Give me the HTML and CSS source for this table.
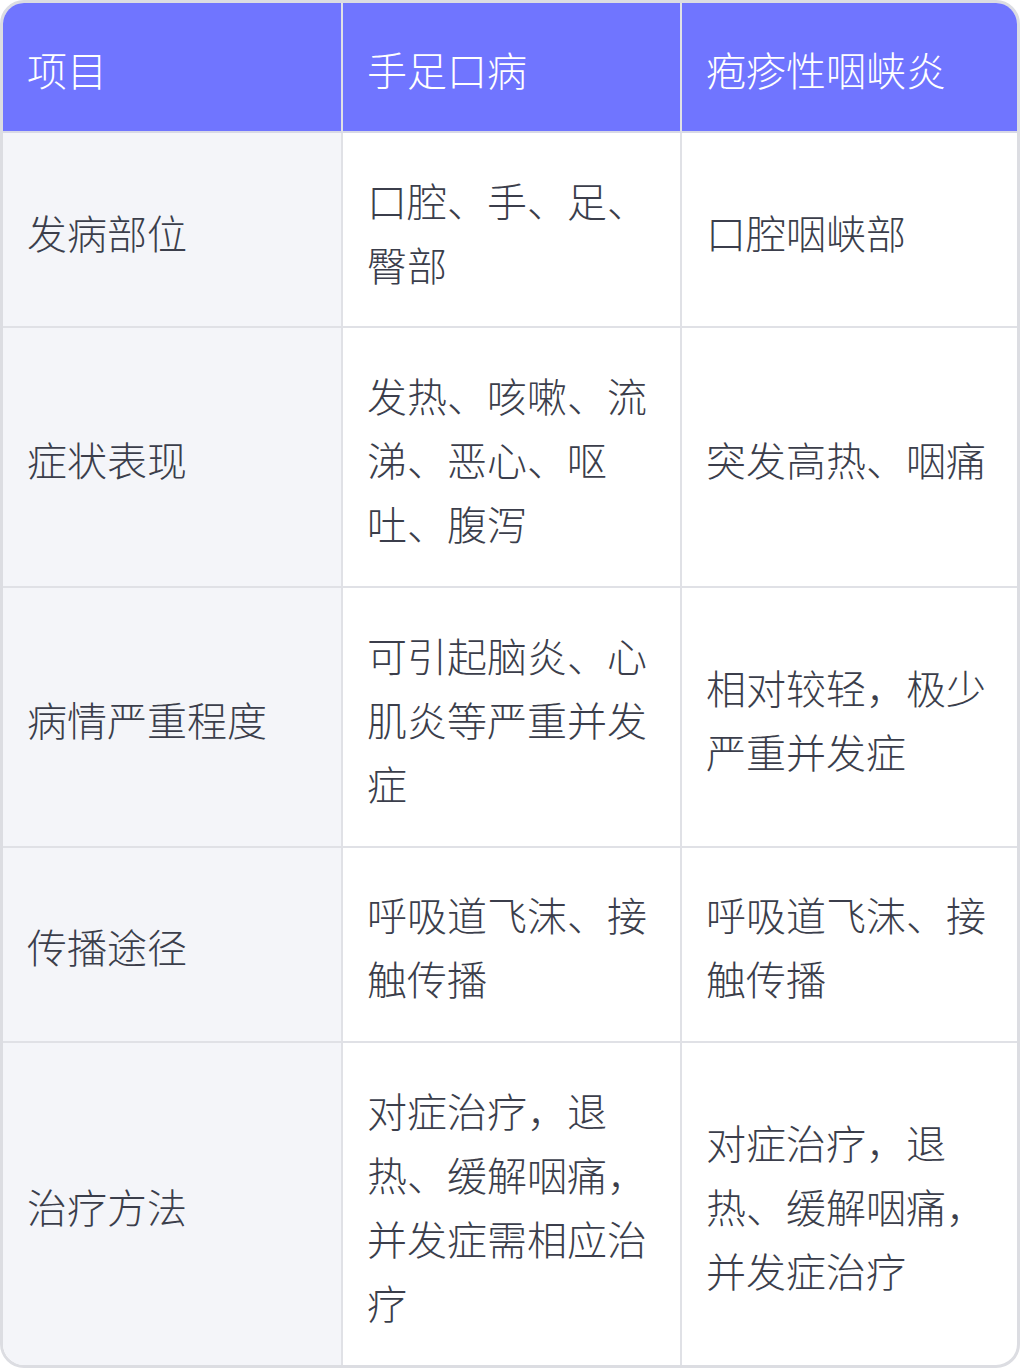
FILE: index.html
```html
<!DOCTYPE html>
<html lang="zh-CN">
<head>
<meta charset="utf-8">
<link rel="stylesheet" href="styles.css">
</head>
<body>
<div class="wrap">
<table class="cmp">
<colgroup><col class="c1"><col class="c2"><col class="c3"></colgroup>
<thead>
<tr><th>项目</th><th>手足口病</th><th>疱疹性咽峡炎</th></tr>
</thead>
<tbody>
<tr><td>发病部位</td><td>口腔、手、足、臀部</td><td>口腔咽峡部</td></tr>
<tr><td>症状表现</td><td>发热、咳嗽、流涕、恶心、呕吐、腹泻</td><td>突发高热、咽痛</td></tr>
<tr><td>病情严重程度</td><td>可引起脑炎、心肌炎等严重并发症</td><td>相对较轻，极少严重并发症</td></tr>
<tr><td>传播途径</td><td>呼吸道飞沫、接触传播</td><td>呼吸道飞沫、接触传播</td></tr>
<tr class="last"><td>治疗方法</td><td>对症治疗，退热、缓解咽痛，并发症需相应治疗</td><td>对症治疗，退热、缓解咽痛，并发症治疗</td></tr>
</tbody>
</table>
</div>
</body>
</html>
```
FILE: styles.css
```css
html, body {
  margin: 0;
  padding: 0;
  background: #ffffff;
}
.wrap {
  width: 1020px;
  height: 1368px;
  box-sizing: border-box;
  border: 3px solid #dcdde2;
  border-radius: 24px;
  overflow: hidden;
  background: #ffffff;
}
.cmp {
  width: 100%;
  height: 100%;
  border-collapse: separate;
  border-spacing: 0;
  table-layout: fixed;
  font-family: "Noto Sans CJK SC", "Noto Sans", sans-serif;
  font-weight: 300;
  font-size: 40px;
  line-height: 64px;
  color: #3b3e4b;
}
.c1 { width: 340px; }
.c2 { width: 339px; }
.c3 { width: 335px; }
.cmp th, .cmp td {
  text-align: left;
  vertical-align: middle;
  padding: 34px 24px 30px 24px;
  border-right: 2px solid #e0e1e6;
  border-bottom: 2px solid #e0e1e6;
  word-break: break-all;
}
.cmp th:last-child, .cmp td:last-child {
  border-right: none;
}
.cmp tr.last td {
  border-bottom: none;
}
.cmp th {
  background: #7075ff;
  color: #ffffff;
  font-weight: 300;
  height: 64px;
  border-bottom-color: #d8d9e6;
}
.cmp td:first-child {
  background: #f4f5f9;
}
```
